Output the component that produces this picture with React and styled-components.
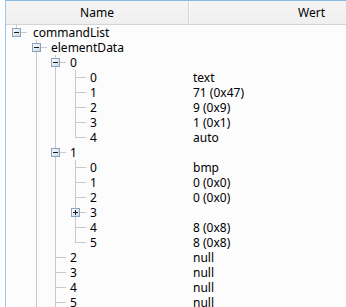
import styled, { createGlobalStyle } from "styled-components";

const GlobalStyle = createGlobalStyle`
  html, body {
    margin: 0;
    padding: 0;
    background: #ffffff;
  }
  body {
    font-family: "Noto Sans", "Open Sans", sans-serif;
    font-size: 12px;
    color: #000000;
  }
`;

const NAME_WIDTH = 182;
const ROW_HEIGHT = 15;

const StyledFrame = styled.div`
  margin-left: 5px;
  width: 341px;
  height: 306px;
  overflow: hidden;
  border-top: 1px solid #86b8e6;
  border-left: 1px solid #9fc8ec;
  background: #fcfcfc;
`;

const StyledHeader = styled.div`
  display: grid;
  grid-template-columns: ${NAME_WIDTH}px 246px;
  height: 23px;
  background: linear-gradient(#f5f5f5, #efefef);
  border-bottom: 1px solid #d5d5d5;
`;

const StyledHeaderCell = styled.div`
  display: flex;
  align-items: center;
  justify-content: center;
  border-left: ${(p) => (p.$divider ? "1px solid #d5d5d5" : "none")};
  box-shadow: ${(p) => (p.$divider ? "inset 1px 0 0 #fafafa" : "none")};
  line-height: 23px;
`;

const StyledRow = styled.div`
  display: grid;
  grid-template-columns: ${NAME_WIDTH}px 1fr;
  height: ${ROW_HEIGHT}px;
  line-height: ${ROW_HEIGHT}px;
  white-space: nowrap;
`;

const StyledNameCell = styled.div`
  display: flex;
  align-items: center;
  overflow: hidden;
`;

const StyledLabel = styled.span`
  padding-left: ${(p) => (p.$root ? 3 : 1)}px;
`;

const StyledValueCell = styled.div`
  padding-left: 5px;
`;

const tree = {
  label: "commandList",
  hasPrev: true,
  children: [
    {
      label: "elementData",
      children: [
        {
          label: "0",
          children: [
            { label: "0", value: "text" },
            { label: "1", value: "71 (0x47)" },
            { label: "2", value: "9 (0x9)" },
            { label: "3", value: "1 (0x1)" },
            { label: "4", value: "auto" },
          ],
        },
        {
          label: "1",
          children: [
            { label: "0", value: "bmp" },
            { label: "1", value: "0 (0x0)" },
            { label: "2", value: "0 (0x0)" },
            { label: "3", collapsed: true },
            { label: "4", value: "8 (0x8)" },
            { label: "5", value: "8 (0x8)" },
          ],
        },
        { label: "2", value: "null" },
        { label: "3", value: "null" },
        { label: "4", value: "null" },
        { label: "5", value: "null" },
      ],
      moreAfter: true,
    },
  ],
  moreAfter: true,
};

// flatten the tree into visible rows with the guide info each row needs
function flatten(node, level, guides, isLast, isFirst, out) {
  out.push({
    label: node.label,
    value: node.value,
    level,
    guides,
    isLast,
    lineAbove: !isFirst || level > 0 || node.hasPrev,
    expander: node.children ? "minus" : node.collapsed ? "plus" : null,
  });
  if (node.children) {
    node.children.forEach((child, i) => {
      const lastChild = i === node.children.length - 1 && !node.moreAfter;
      flatten(child, level + 1, [...guides, !isLast], lastChild, i === 0, out);
    });
  }
  return out;
}

const rows = flatten(tree, 0, [], true, true, []);

const centerX = (level) => Math.round(10 + 19.5 * level);

function Connectors({ row }) {
  const cx = centerX(row.level);
  const width = cx + 14;
  const mid = 7.5;
  const lineColor = "#c9c9c9";
  return (
    <svg width={width} height={ROW_HEIGHT} shapeRendering="crispEdges">
      {row.guides.map((on, k) =>
        on ? (
          <line
            key={k}
            x1={centerX(k) + 0.5}
            x2={centerX(k) + 0.5}
            y1={0}
            y2={ROW_HEIGHT}
            stroke={lineColor}
          />
        ) : null
      )}
      {row.lineAbove && (
        <line x1={cx + 0.5} x2={cx + 0.5} y1={0} y2={mid} stroke={lineColor} />
      )}
      {!row.isLast && (
        <line
          x1={cx + 0.5}
          x2={cx + 0.5}
          y1={mid}
          y2={ROW_HEIGHT}
          stroke={lineColor}
        />
      )}
      <line x1={cx} x2={cx + 11} y1={mid} y2={mid} stroke={lineColor} />
      {row.expander && (
        <g>
          <defs>
            <linearGradient id="exp" x1="0" y1="0" x2="1" y2="1">
              <stop offset="0" stopColor="#ffffff" />
              <stop offset="1" stopColor="#c6d4e2" />
            </linearGradient>
          </defs>
          <rect
            x={cx - 4 + 0.5}
            y={3.5}
            width={8}
            height={8}
            fill="url(#exp)"
            stroke="#8aa2bc"
          />
          <line x1={cx - 2} x2={cx + 3} y1={mid} y2={mid} stroke="#1a1a1a" />
          {row.expander === "plus" && (
            <line
              x1={cx + 0.5}
              x2={cx + 0.5}
              y1={5}
              y2={10}
              stroke="#1a1a1a"
            />
          )}
        </g>
      )}
    </svg>
  );
}

export default function App() {
  return (
    <>
      <GlobalStyle />
      <StyledFrame>
        <StyledHeader>
          <StyledHeaderCell>Name</StyledHeaderCell>
          <StyledHeaderCell $divider>Wert</StyledHeaderCell>
        </StyledHeader>
        {rows.map((row, i) => (
          <StyledRow key={i}>
            <StyledNameCell>
              <Connectors row={row} />
              <StyledLabel $root={row.level === 0}>{row.label}</StyledLabel>
            </StyledNameCell>
            <StyledValueCell>{row.value}</StyledValueCell>
          </StyledRow>
        ))}
      </StyledFrame>
    </>
  );
}
